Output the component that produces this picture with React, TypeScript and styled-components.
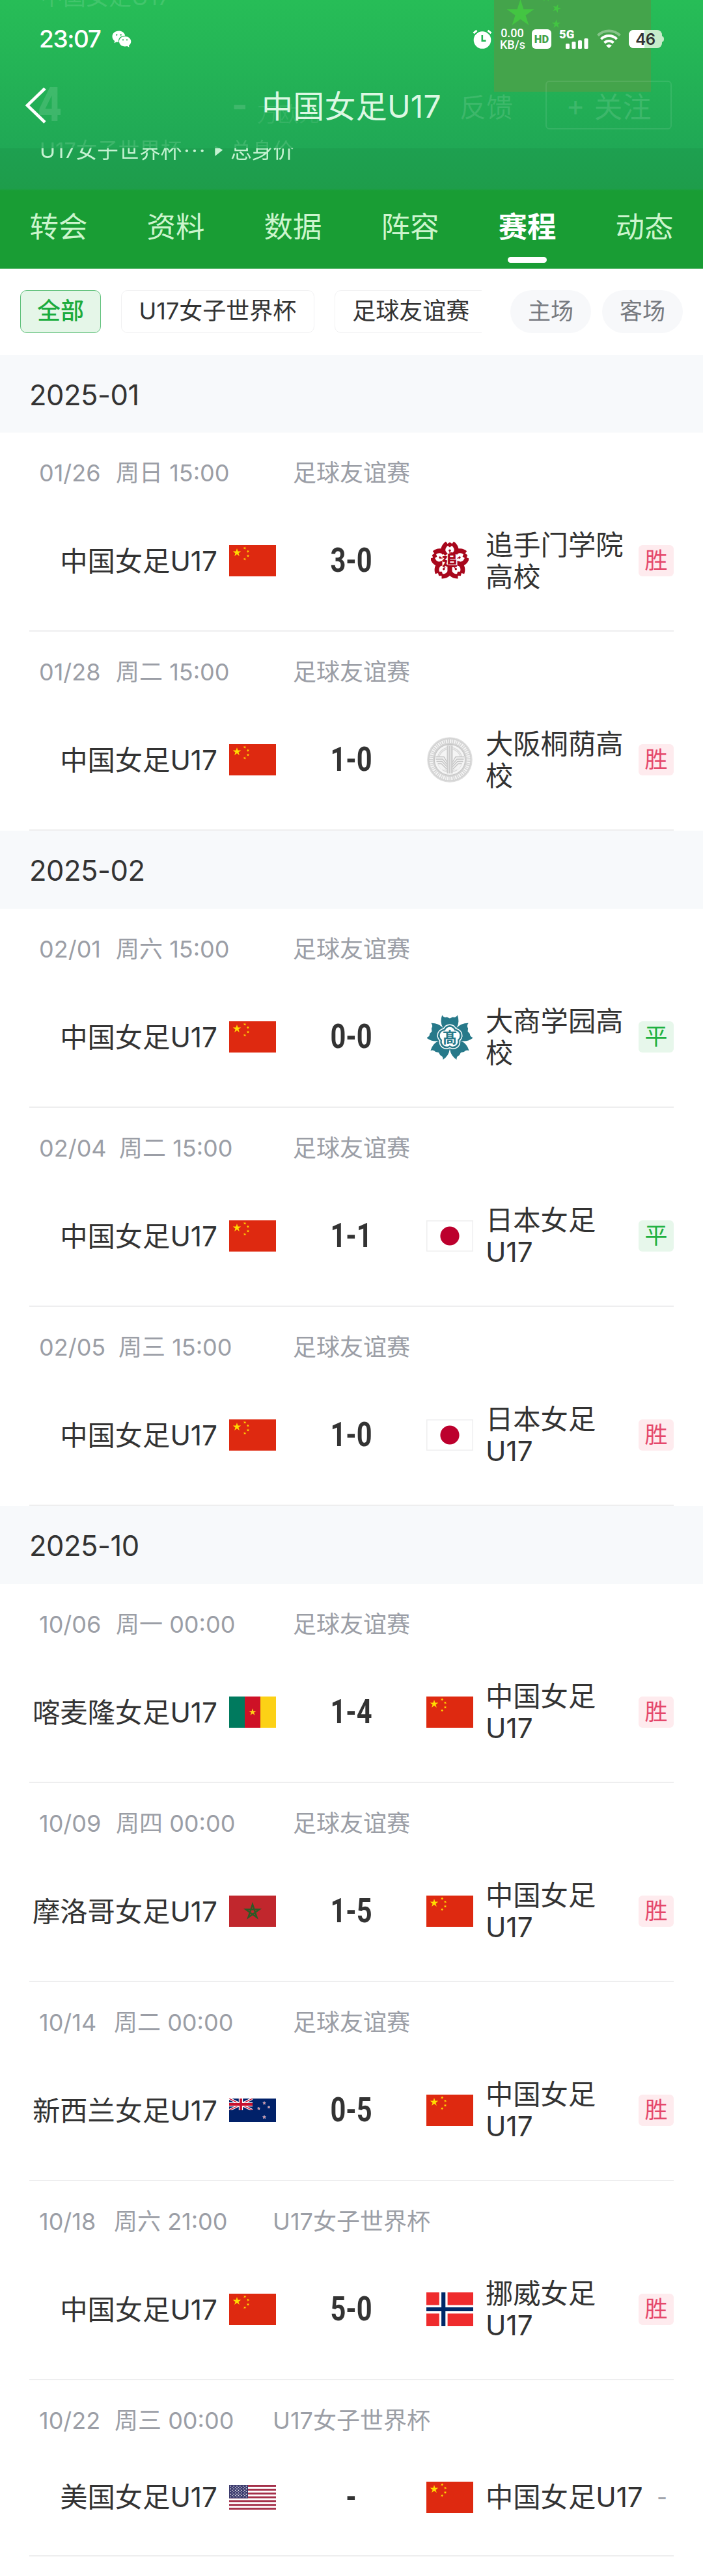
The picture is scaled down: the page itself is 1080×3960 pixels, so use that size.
import React from "react";
import styled, { createGlobalStyle } from "styled-components";

const Global = createGlobalStyle`
  * { box-sizing: border-box; }
  body {
    margin: 0;
    background: #fff;
    color: #333;
    font-family: Inter, "Noto Sans CJK SC", sans-serif;
    -webkit-font-smoothing: antialiased;
  }
  svg { display: block; flex: none; }
`;

const Page = styled.div`
  width: 1080px;
  height: 3960px;
  overflow: hidden;
  background: #fff;
`;

/* ---------- header ---------- */

const Hero = styled.header`
  position: relative;
  height: 293px;
  overflow: hidden;
  background: linear-gradient(#27bd57 0, #20a855 228px, #1ea050 228px, #1e9d4b 290px, #199e35 293px);
`;

const TopBar = styled.div`
  position: relative;
  height: 228px;
`;

const StatusBar = styled.div`
  display: flex;
  align-items: center;
  justify-content: space-between;
  height: 88px;
  padding: 31px 60px 0 60px;
  color: #fff;
`;

const StatusGroup = styled.div<{ $gap: number }>`
  display: flex;
  align-items: center;
  gap: ${(p) => p.$gap}px;
`;

const Clock = styled.span`
  font-size: 37px;
  line-height: 56px;
  font-weight: 500;
  letter-spacing: -1.4px;
`;

const Speed = styled.div`
  width: 38px;
  margin-right: -1px;
  text-align: center;
  font: 500 18px/18px Roboto, sans-serif;
`;

const NavBar = styled.div`
  display: grid;
  grid-template-columns: 120px 1fr 120px;
  align-items: center;
  height: 147px;
  padding: 0 38px;
`;

const Title = styled.h1`
  margin: -2px 0 2px;
  text-align: center;
  font-size: 48px;
  font-weight: 400;
  letter-spacing: 0.2px;
  color: #dcf8e3;
`;

/* Page content that has scrolled beneath the translucent bar */
const Underlay = styled.div`
  position: absolute;
  inset: 0;
`;

const Ghost = styled.span<{ $x: number; $y: number; $size: number; $weight?: number; $alpha?: number; $squeeze?: number }>`
  position: absolute;
  left: ${(p) => p.$x}px;
  top: ${(p) => p.$y}px;
  font-size: ${(p) => p.$size}px;
  line-height: 1;
  font-weight: ${(p) => p.$weight ?? 400};
  white-space: nowrap;
  color: rgba(255, 255, 255, ${(p) => p.$alpha ?? 0.13});
  transform: scaleX(${(p) => p.$squeeze ?? 1});
  transform-origin: left;
`;

const GhostFlag = styled.svg`
  position: absolute;
  left: 759px;
  top: 0;
`;

const GhostFollow = styled.div`
  position: absolute;
  left: 838px;
  top: 124px;
  width: 194px;
  height: 75px;
  display: flex;
  align-items: center;
  justify-content: center;
  gap: 14px;
  border: 2px solid rgba(255, 255, 255, 0.09);
  border-radius: 6px;
  font-size: 44px;
  color: rgba(255, 255, 255, 0.13);
`;

const HeroLinks = styled.div`
  position: absolute;
  left: 61px;
  top: 211px;
  display: flex;
  align-items: center;
  height: 42px;
  font-size: 32.5px;
  line-height: 42px;
  color: #c5f2d2;
  white-space: nowrap;
  -webkit-mask-image: linear-gradient(rgba(0, 0, 0, 0.18) 17px, #000 17px);
  mask-image: linear-gradient(rgba(0, 0, 0, 0.18) 17px, #000 17px);
`;

const Dots = styled.span`
  margin-left: 3px;
  letter-spacing: 2.5px;
  width: 48px;
`;

const Caret = styled.i`
  width: 12px;
  height: 16px;
  margin-right: 12px;
  background: currentColor;
  clip-path: polygon(0 0, 100% 40%, 0 100%);
`;

const Tabs = styled.nav`
  display: grid;
  grid-template-columns: repeat(6, 180px);
  height: 120px;
  background: #199d34;
`;

const Tab = styled.div<{ $active?: boolean }>`
  display: flex;
  flex-direction: column;
  align-items: center;
  padding-top: 22px;
  font-size: 44.5px;
  line-height: 68px;
  font-weight: ${(p) => (p.$active ? 700 : 400)};
  color: ${(p) => (p.$active ? "#fff" : "#ccf5cd")};

  &::after {
    content: "";
    width: 60px;
    height: 9px;
    margin-top: 12px;
    border-radius: 5px;
    background: ${(p) => (p.$active ? "#fff" : "transparent")};
  }
`;

/* ---------- filters ---------- */

const Filters = styled.div`
  display: flex;
  align-items: flex-start;
  height: 133px;
  padding: 33px 31px 0;
`;

const ChipStrip = styled.div`
  display: flex;
  gap: 31px;
  width: 709px;
  overflow: hidden;
`;

const Chip = styled.div<{ $active?: boolean }>`
  flex: none;
  height: 66px;
  padding: 0 ${(p) => (p.$active ? 25 : 26.5)}px;
  border: 1.5px solid ${(p) => (p.$active ? "#5fc07a" : "#f1f1f2")};
  border-radius: 10px;
  background: ${(p) => (p.$active ? "#e5f6e8" : "#fff")};
  font-size: 36px;
  line-height: 62px;
  font-weight: ${(p) => (p.$active ? 500 : 400)};
  color: ${(p) => (p.$active ? "#1cab3d" : "#333")};
`;

const Pills = styled.div`
  display: flex;
  gap: 17px;
  margin-left: 44px;
`;

const Pill = styled.div`
  width: 124px;
  height: 66px;
  border-radius: 33px;
  background: #f7f8fa;
  text-align: center;
  font-size: 35px;
  line-height: 65px;
  color: #777a80;
`;

/* ---------- fixtures ---------- */

const MonthBar = styled.h2<{ $height: number }>`
  display: flex;
  align-items: center;
  height: ${(p) => p.$height}px;
  margin: 0;
  padding: 2px 45px 0;
  background: #f7f9fb;
  font-size: 43.5px;
  font-weight: 400;
  letter-spacing: -0.5px;
  color: #333;
`;

const Fixture = styled.article`
  margin: 0 45px;
  padding: 36px 0 58px;
  border-bottom: 2px solid #eeeeef;
`;

const Meta = styled.div`
  display: grid;
  grid-template-columns: 1fr auto 1fr;
  padding: 0 15px;
  font-size: 36px;
  line-height: 52px;
  white-space: nowrap;
  color: #9b9ea6;
`;

const Kickoff = styled.div`
  display: flex;
  width: 0;
`;

const DateCell = styled.span<{ $width: number }>`
  flex: none;
  width: ${(p) => p.$width}px;
`;

const Match = styled.div`
  display: grid;
  grid-template-columns: 379px 231px 380px;
  align-items: center;
  min-height: 63px;
  margin-top: 60px;
`;

const Home = styled.div`
  display: flex;
  align-items: center;
  justify-content: flex-end;
  gap: 18px;
`;

const Away = styled.div`
  display: flex;
  align-items: center;
`;

const TeamName = styled.div<{ $away?: boolean }>`
  font-size: 42.3px;
  line-height: 49px;
  color: #333;
  ${(p) => (p.$away ? "flex: 1; padding: 0 4px 0 19px;" : "white-space: nowrap;")}
`;

const Score = styled.div`
  text-align: center;
  font: 700 52px/60px Roboto, sans-serif;
  transform: scaleX(0.8);
  color: #333;
`;

const Result = styled.div<{ $kind: ResultKind }>`
  flex: none;
  width: ${(p) => (p.$kind === "none" ? 34 : 54)}px;
  height: 48px;
  border-radius: 6px;
  font-size: 35px;
  line-height: 46px;
  text-align: ${(p) => (p.$kind === "none" ? "left" : "center")};
  padding-left: ${(p) => (p.$kind === "none" ? 8 : 0)}px;
  color: ${(p) => (p.$kind === "win" ? "#e5486b" : p.$kind === "draw" ? "#1fb141" : "#9b9ea6")};
  background: ${(p) => (p.$kind === "win" ? "#feebee" : p.$kind === "draw" ? "#e7f7eb" : "transparent")};
`;

const BadgeBox = styled.div`
  flex: none;
  display: flex;
  align-items: center;
  justify-content: center;
  width: 72px;
`;

/* ---------- drawings ---------- */

function star(cx: number, cy: number, r: number, rot = 0, inner = 0.382) {
  const pts: string[] = [];
  for (let i = 0; i < 10; i++) {
    const a = ((rot - 90 + i * 36) * Math.PI) / 180;
    const k = i % 2 ? r * inner : r;
    pts.push(`${(cx + k * Math.cos(a)).toFixed(2)},${(cy + k * Math.sin(a)).toFixed(2)}`);
  }
  return pts.join(" ");
}

const China = () => (
  <svg width="72" height="48" viewBox="0 0 72 48">
    <rect width="72" height="48" fill="#de2910" />
    <g fill="#ffde00">
      <polygon points={star(12, 11.6, 6.6)} />
      <polygon points={star(24, 4.6, 2.4, 20)} />
      <polygon points={star(29, 9.6, 2.4, 45)} />
      <polygon points={star(29, 16.6, 2.4)} />
      <polygon points={star(24, 21.4, 2.4, 20)} />
    </g>
  </svg>
);

const Japan = () => (
  <svg width="72" height="48" viewBox="0 0 72 48">
    <rect x="0.75" y="0.75" width="70.5" height="46.5" fill="#fff" stroke="#eeeeef" strokeWidth="1.5" />
    <circle cx="36" cy="24" r="14.6" fill="#bc002d" />
  </svg>
);

const Cameroon = () => (
  <svg width="72" height="48" viewBox="0 0 72 48">
    <rect width="24" height="48" fill="#007a5e" />
    <rect x="24" width="24" height="48" fill="#ce1126" />
    <rect x="48" width="24" height="48" fill="#fcd116" />
    <polygon points={star(36, 24, 5.8)} fill="#fcd116" />
  </svg>
);

const Morocco = () => (
  <svg width="72" height="48" viewBox="0 0 72 48">
    <rect width="72" height="48" fill="#c1272d" />
    <path
      d="M36 13.5 L42.6 33.6 L25.5 21.2 H46.5 L29.4 33.6 Z"
      fill="none"
      stroke="#2c5a25"
      strokeWidth="2.4"
    />
  </svg>
);

const NewZealand = () => (
  <svg width="72" height="36" viewBox="0 0 72 36">
    <rect width="72" height="36" fill="#012169" />
    <svg width="36" height="18" viewBox="0 0 36 18">
      <path d="M0 0 L36 18 M36 0 L0 18" stroke="#fff" strokeWidth="3.8" />
      <path d="M0 0 L36 18 M36 0 L0 18" stroke="#c8102e" strokeWidth="1.4" />
      <path d="M18 0 V18 M0 9 H36" stroke="#fff" strokeWidth="6.4" />
      <path d="M18 0 V18 M0 9 H36" stroke="#c8102e" strokeWidth="3.8" />
    </svg>
    <g fill="#d9405a" stroke="#fff" strokeWidth="0.6">
      <polygon points={star(54, 7, 2.4)} />
      <polygon points={star(61, 13.4, 2)} />
      <polygon points={star(45.5, 15.4, 2.2)} />
      <polygon points={star(54, 28.6, 2.6)} />
    </g>
  </svg>
);

const Norway = () => (
  <svg width="72" height="52" viewBox="0 0 72 52">
    <rect width="72" height="52" fill="#ef2b2d" />
    <path d="M26.2 0 V52 M0 26 H72" stroke="#fff" strokeWidth="12.8" />
    <path d="M26.2 0 V52 M0 26 H72" stroke="#002868" strokeWidth="6.2" />
  </svg>
);

const USA = () => (
  <svg width="72" height="38" viewBox="0 0 72 38">
    <rect width="72" height="38" fill="#fff" />
    {[0, 2, 4, 6, 8, 10, 12].map((i) => (
      <rect key={i} y={(i * 38) / 13} width="72" height={38 / 13} fill="#a5304a" />
    ))}
    <rect width="29" height="20.5" fill="#3c3b6e" />
    <g fill="#fff">
      {Array.from({ length: 9 }, (_, r) =>
        Array.from({ length: r % 2 ? 5 : 6 }, (_, c) => (
          <circle key={`${r}-${c}`} cx={2.4 + c * 4.8 + (r % 2 ? 2.4 : 0)} cy={2 + r * 2.06} r="0.8" />
        ))
      )}
    </g>
  </svg>
);

const turns = [0, 72, 144, 216, 288];

const OtemonCrest = () => (
  <svg width="58" height="60" viewBox="-29 -30 58 60">
    <g fill="#a8071c">
      {turns.map((a) => (
        <path
          key={a}
          transform={`rotate(${a})`}
          d="M-5 0 L-13.5 -13 C-15 -21 -10 -27 -6 -29.5 L-3.4 -26 L0 -28.6 L3.4 -26 L6 -29.5 C10 -27 15 -21 13.5 -13 L5 0 Z"
        />
      ))}
      <circle r="17" />
    </g>
    {turns.map((a) => (
      <g key={a} transform={`rotate(${a})`}>
        <path d="M-1.4 -8 L-6.5 -15 C-7.4 -18.6 -5 -21.6 -3 -23 L0 -20.6 L3 -23 C5 -21.6 7.4 -18.6 6.5 -15 L1.4 -8 Z" fill="#fff" />
        <path d="M0 -10 V-15" stroke="#a8071c" strokeWidth="1.2" />
        <circle cy="-15.8" r="1.7" fill="#a8071c" />
      </g>
    ))}
    <rect x="-11.5" y="-10" width="23" height="20" rx="2" fill="#fff" />
    <text y="8.4" textAnchor="middle" fontFamily="Noto Sans CJK TC" fontWeight="900" fontSize="24" fill="#a8071c">
      追
    </text>
  </svg>
);

const ToinCrest = () => (
  <svg width="70" height="70" viewBox="-35 -35 70 70">
    <circle r="34" fill="#d3d3d3" stroke="#dedede" strokeWidth="1.5" />
    <circle r="28.7" fill="none" stroke="#f4f4f4" strokeWidth="5.5" strokeDasharray="1.4 1.5 2.2 1.2" />
    <circle r="23.6" fill="#f5f5f5" stroke="#c8c8c8" strokeWidth="1.2" />
    <circle r="18" fill="none" stroke="#d8d8d8" strokeWidth="3.4" />
    <circle r="18" fill="none" stroke="#f2f2f2" strokeWidth="1" />
    <path d="M-22.5 -5 H-8 L-4 2 V15 H-13 L-19 6 Z M22.5 -5 H8 L4 2 V15 H13 L19 6 Z" fill="#f3f3f3" />
    <g fill="none" stroke="#c4c4c4" strokeWidth="1.3">
      <path d="M-22 -4.5 H-9 L-4 4 M-21.5 -1 H-11 L-4 7.5 M-20.5 2.5 H-12 L-4 11 M-18.5 6 H-13 L-5 14" />
      <path d="M22 -4.5 H9 L4 4 M21.5 -1 H11 L4 7.5 M20.5 2.5 H12 L4 11 M18.5 6 H13 L5 14" />
    </g>
    <rect x="-4.5" y="-22" width="9" height="43" fill="#cdcdcd" />
    <path d="M-1.6 -21 V21 M1.6 -21 V21" stroke="#f2f2f2" strokeWidth="1" />
  </svg>
);

const DaishoCrest = () => (
  <svg width="70" height="70" viewBox="-35 -35.5 70 70">
    <g fill="#27798a">
      {turns.map((a) => (
        <path
          key={a}
          transform={`rotate(${a})`}
          d="M-11 -15.500 Q-15.500 -24 -11.800 -34 Q-9 -29.500 -4.500 -31 L0 -29 L4.500 -31 Q9 -29.500 11.800 -34 Q15.500 -24 11 -15.500 L0 0 Z"
        />
      ))}
    </g>
    <g fill="#fff">
      {turns.map((a) => (
        <circle key={a} transform={`rotate(${a})`} cy="-9" r="11" />
      ))}
    </g>
    <g fill="#27798a">
      {turns.map((a) => (
        <circle key={a} transform={`rotate(${a})`} cy="-8.800" r="9.700" />
      ))}
    </g>
    <g fill="#fff">
      {turns.map((a) => (
        <circle key={a} transform={`rotate(${a})`} cy="-8.200" r="7.600" />
      ))}
      <circle r="9" />
    </g>
    <text y="8.600" textAnchor="middle" fontFamily="Noto Sans CJK JP" fontWeight="700" fontSize="22.500" fill="#27798a">
      髙
    </text>
  </svg>
);

const WeChat = () => (
  <svg width="30" height="26" viewBox="0 0 30 26">
    <path d="M10.5 0.5 C4.6 0.5 0.5 4.4 0.5 9.2 C0.5 12 2 14.4 4.2 16 L3.4 19.2 L7 17.4 C8 17.7 9.3 17.9 10.3 17.9 C9 11 14 7.6 20.3 7.7 C19 3 15 0.5 10.5 0.5 Z" fill="#fff" />
    <path d="M20 9 C14.8 9 11 12.5 11 16.8 C11 21.2 14.8 24.5 20 24.5 C21.2 24.5 22.4 24.3 23.4 24 L26.6 25.7 L25.9 22.9 C28 21.5 29.3 19.3 29.3 16.8 C29.3 12.5 25.2 9 20 9 Z" fill="#fff" />
    <g fill="#24b654">
      <circle cx="7.2" cy="6.6" r="1.2" />
      <circle cx="13.6" cy="6.6" r="1.2" />
      <circle cx="17" cy="14.3" r="1.1" />
      <circle cx="23" cy="14.3" r="1.1" />
    </g>
  </svg>
);

const Alarm = () => (
  <svg width="30" height="30" viewBox="0 0 30 30">
    <circle cx="15" cy="16.5" r="13.3" fill="#fff" />
    <path d="M1.5 6.500 L7 1.800 M28.500 6.500 L23 1.800" stroke="#24b855" strokeWidth="6.500" />
    <path d="M1.5 6 L6.500 1.800 M28.500 6 L23.500 1.800" stroke="#fff" strokeWidth="3" />
    <path d="M14.8 9 V17.600 H20.500" fill="none" stroke="#24b654" strokeWidth="2.600" />
  </svg>
);

const HD = () => (
  <svg width="30" height="30" viewBox="0 0 30 30">
    <rect width="30" height="30" rx="6" fill="#fff" />
    <text x="15" y="20.800" textAnchor="middle" fontFamily="Roboto" fontWeight="900" fontSize="16.500" fill="#43a24b">
      HD
    </text>
  </svg>
);

const Signal = () => (
  <svg width="46" height="30" viewBox="0 0 46 30">
    <text x="0" y="13.600" fontFamily="Roboto" fontWeight="900" fontSize="18.500" fill="#fff">
      5G
    </text>
    <g fill="#fff">
      <rect x="10" y="22" width="6" height="8" rx="1.500" />
      <rect x="19.500" y="19" width="6" height="11" rx="1.500" />
      <rect x="29" y="17" width="6" height="13" rx="1.500" />
      <rect x="38.500" y="14" width="6" height="16" rx="1.500" />
    </g>
  </svg>
);

const Wifi = () => (
  <svg width="37" height="29" viewBox="0 0 37 29">
    <g fill="none" stroke="#fff" strokeWidth="4">
      <path d="M1.500 9.500 A24 24 0 0 1 35.500 9.500" strokeOpacity="0.350" />
      <path d="M6.300 15.200 A17 17 0 0 1 30.700 15.200" />
      <path d="M11.500 20.800 A10 10 0 0 1 25.500 20.800" />
    </g>
    <path d="M14 25 Q18.500 21.500 23 25 L18.500 29 Z" fill="#fff" />
  </svg>
);

const Battery = () => (
  <svg width="54" height="28" viewBox="0 0 54 28">
    <rect width="51" height="28" rx="7.500" fill="#c7eccb" />
    <path d="M7.500 0 H24 V28 H7.500 A7.500 7.500 0 0 1 0 20.500 V7.500 A7.500 7.500 0 0 1 7.500 0 Z" fill="#fff" />
    <path d="M51 9.500 Q54 10 54 14 T51 18.500 Z" fill="#c7eccb" />
    <text x="25.500" y="22.800" textAnchor="middle" fontFamily="Inter" fontWeight="600" fontSize="24" letterSpacing="-0.500" fill="#333">
      46
    </text>
  </svg>
);

const Back = () => (
  <svg width="34" height="56" viewBox="0 0 34 56">
    <path d="M31 2 L4 28 L31 54" fill="none" stroke="#fff" strokeWidth="4.600" />
  </svg>
);

const emblems = {
  cn: China,
  jp: Japan,
  cm: Cameroon,
  ma: Morocco,
  nz: NewZealand,
  no: Norway,
  us: USA,
  otemon: OtemonCrest,
  toin: ToinCrest,
  daisho: DaishoCrest,
};

/* ---------- data ---------- */

type ResultKind = "win" | "draw" | "none";
type Emblem = keyof typeof emblems;

interface FixtureData {
  date: string;
  dateWidth: number;
  time: string;
  cup: string;
  home: [string, Emblem];
  score: string;
  away: [string, Emblem];
  result: ResultKind;
}

const FRIENDLY = "足球友谊赛";
const WORLD_CUP = "U17女子世界杯";
const CN: [string, Emblem] = ["中国女足U17", "cn"];

const fx = (
  date: string,
  dateWidth: number,
  time: string,
  cup: string,
  home: [string, Emblem],
  score: string,
  away: [string, Emblem],
  result: ResultKind
): FixtureData => ({ date, dateWidth, time, cup, home, score, away, result });

const months: { label: string; height: number; items: FixtureData[] }[] = [
  {
    label: "2025-01",
    height: 119,
    items: [
      fx("01/26", 118, "周日 15:00", FRIENDLY, CN, "3-0", ["追手门学院高校", "otemon"], "win"),
      fx("01/28", 118, "周二 15:00", FRIENDLY, CN, "1-0", ["大阪桐荫高校", "toin"], "win"),
    ],
  },
  {
    label: "2025-02",
    height: 120,
    items: [
      fx("02/01", 118, "周六 15:00", FRIENDLY, CN, "0-0", ["大商学园高校", "daisho"], "draw"),
      fx("02/04", 123, "周二 15:00", FRIENDLY, CN, "1-1", ["日本女足U17", "jp"], "draw"),
      fx("02/05", 122, "周三 15:00", FRIENDLY, CN, "1-0", ["日本女足U17", "jp"], "win"),
    ],
  },
  {
    label: "2025-10",
    height: 120,
    items: [
      fx("10/06", 118, "周一 00:00", FRIENDLY, ["喀麦隆女足U17", "cm"], "1-4", CN, "win"),
      fx("10/09", 118, "周四 00:00", FRIENDLY, ["摩洛哥女足U17", "ma"], "1-5", CN, "win"),
      fx("10/14", 115, "周二 00:00", FRIENDLY, ["新西兰女足U17", "nz"], "0-5", CN, "win"),
      fx("10/18", 115, "周六 21:00", WORLD_CUP, CN, "5-0", ["挪威女足U17", "no"], "win"),
      fx("10/22", 116, "周三 00:00", WORLD_CUP, ["美国女足U17", "us"], "-", CN, "none"),
    ],
  },
];

const resultText: Record<ResultKind, string> = { win: "胜", draw: "平", none: "-" };

function TeamBadge({ id }: { id: Emblem }) {
  const Drawing = emblems[id];
  return (
    <BadgeBox>
      <Drawing />
    </BadgeBox>
  );
}

function FixtureRow({ f }: { f: FixtureData }) {
  return (
    <Fixture>
      <Meta>
        <Kickoff>
          <DateCell $width={f.dateWidth}>{f.date}</DateCell>
          <span>{f.time}</span>
        </Kickoff>
        <span>{f.cup}</span>
      </Meta>
      <Match>
        <Home>
          <TeamName>{f.home[0]}</TeamName>
          <TeamBadge id={f.home[1]} />
        </Home>
        <Score>{f.score}</Score>
        <Away>
          <TeamBadge id={f.away[1]} />
          <TeamName $away>{f.away[0]}</TeamName>
          <Result $kind={f.result}>{resultText[f.result]}</Result>
        </Away>
      </Match>
    </Fixture>
  );
}

export default function App() {
  return (
    <Page>
      <Global />
      <Hero>
        <Underlay>
          <Ghost $x={62} $y={-22} $size={35}>中国女足U17</Ghost>
          <GhostFlag width="241" height="141" viewBox="0 0 241 141">
            <rect width="241" height="141" fill="#44a44b" />
            <g fill="#43c542">
              <polygon points={star(40.5, 21, 22)} />
              <polygon points={star(80, -4, 7)} />
              <polygon points={star(96, 13, 7, 20)} />
              <polygon points={star(95.5, 37, 7)} />
            </g>
          </GhostFlag>
          <Ghost $x={58} $y={124} $size={72} $weight={800} $squeeze={0.75}>4</Ghost>
          <Ghost $x={356} $y={136} $size={52} $weight={800}>-</Ghost>
          <Ghost $x={395} $y={160} $size={32} $alpha={0.09}>万欧元</Ghost>
          <Ghost $x={706} $y={145} $size={41}>反馈</Ghost>
          <GhostFollow>
            <span>+</span>
            <span>关注</span>
          </GhostFollow>
          <HeroLinks>
            <span>U17女子世界杯</span>
            <Dots>···</Dots>
            <Caret />
            <span>总身价</span>
          </HeroLinks>
        </Underlay>
        <TopBar>
          <StatusBar>
            <StatusGroup $gap={17}>
              <Clock>23:07</Clock>
              <WeChat />
            </StatusGroup>
            <StatusGroup $gap={12}>
              <Alarm />
              <Speed>
                0.00
                <br />
                KB/s
              </Speed>
              <HD />
              <Signal />
              <Wifi />
              <Battery />
            </StatusGroup>
          </StatusBar>
          <NavBar>
            <Back />
            <Title>中国女足U17</Title>
          </NavBar>
        </TopBar>
      </Hero>
      <Tabs>
        {["转会", "资料", "数据", "阵容", "赛程", "动态"].map((t) => (
          <Tab key={t} $active={t === "赛程"}>
            {t}
          </Tab>
        ))}
      </Tabs>
      <Filters>
        <ChipStrip>
          <Chip $active>全部</Chip>
          <Chip>U17女子世界杯</Chip>
          <Chip>足球友谊赛</Chip>
        </ChipStrip>
        <Pills>
          <Pill>主场</Pill>
          <Pill>客场</Pill>
        </Pills>
      </Filters>
      {months.map((m) => (
        <section key={m.label}>
          <MonthBar $height={m.height}>{m.label}</MonthBar>
          {m.items.map((f) => (
            <FixtureRow key={f.date} f={f} />
          ))}
        </section>
      ))}
    </Page>
  );
}
